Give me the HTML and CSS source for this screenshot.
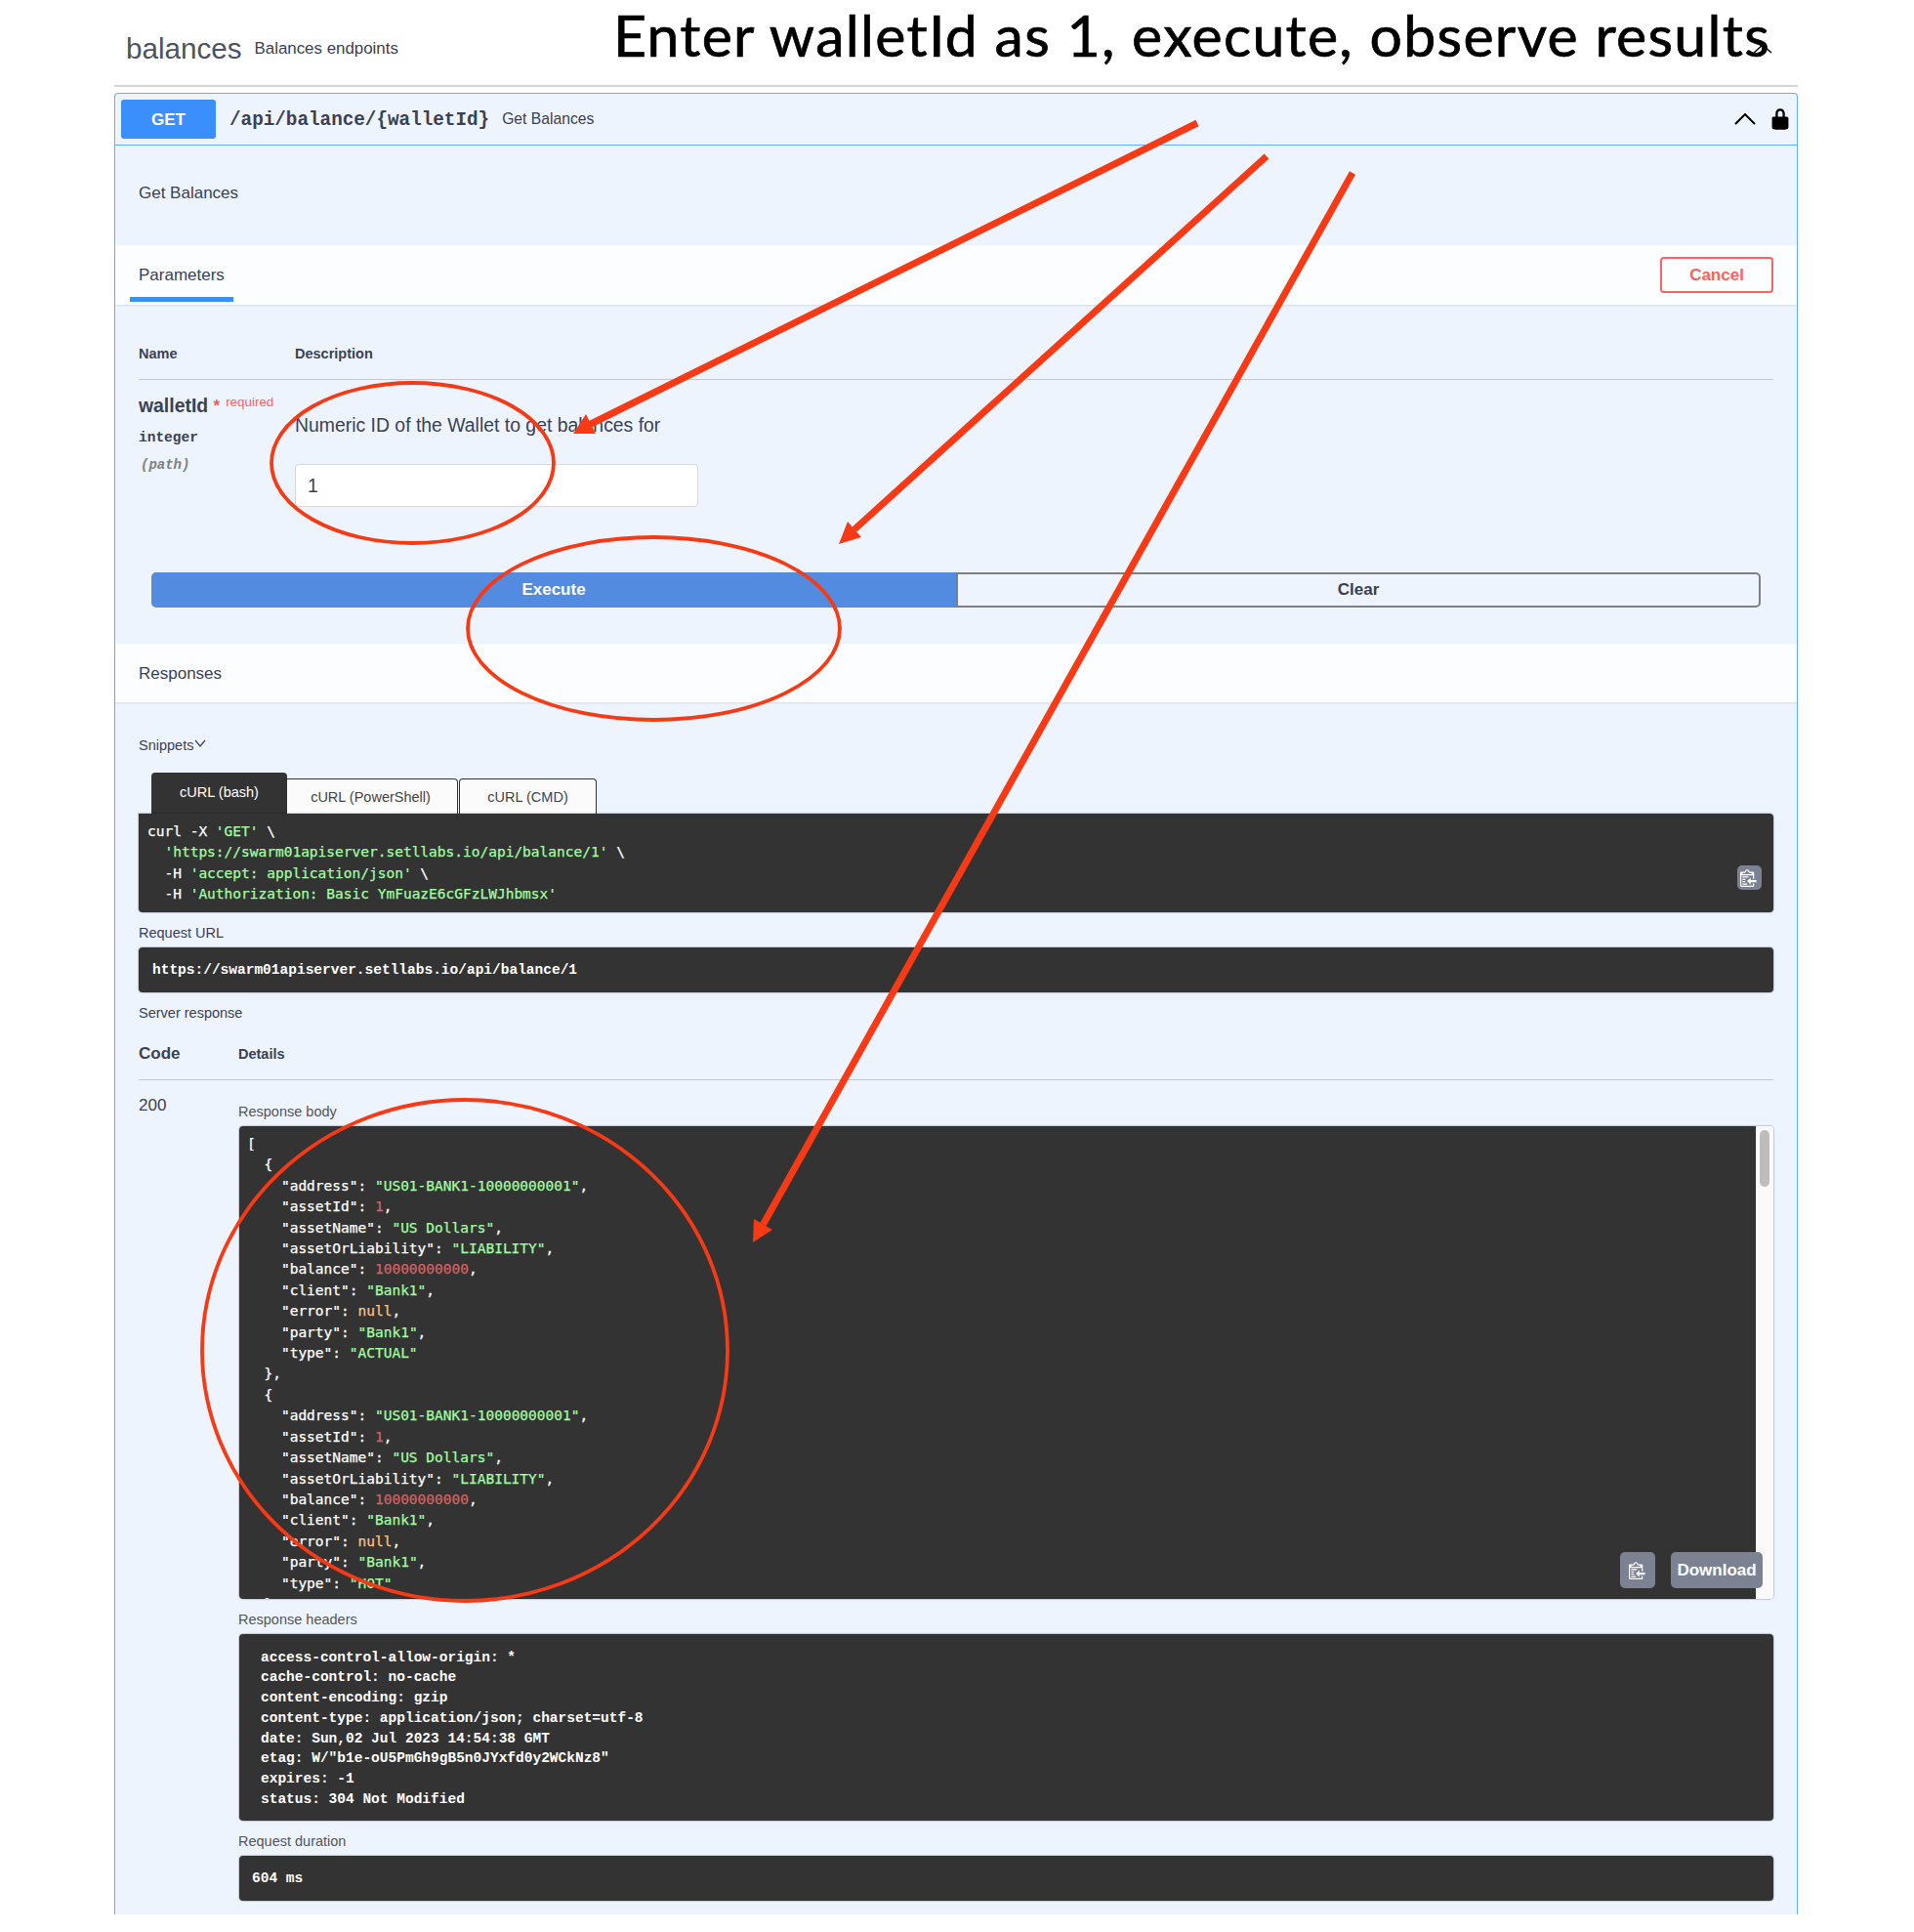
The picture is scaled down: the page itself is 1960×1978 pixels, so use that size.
FILE: index.html
```html
<!DOCTYPE html>
<html lang="en">
<head>
<meta charset="utf-8">
<title>balances</title>
<link rel="stylesheet" href="styles.css">
</head>
<body>
<svg class="sprite" aria-hidden="true"><symbol id="clip" viewBox="0 0 16 16"><path fill="#fff" fill-rule="evenodd" d="M2 13h4v1H2v-1zm5-6H2v1h5V7zm2 3V8l-3 3 3 3v-2h5v-2H9zM4.5 9H2v1h2.5V9zM2 12h2.5v-1H2v1zm9 1h1v2c-.02.28-.11.52-.3.7-.19.18-.42.28-.7.3H1c-.55 0-1-.45-1-1V4c0-.55.45-1 1-1h3c0-1.11.89-2 2-2 1.11 0 2 .89 2 2h3c.55 0 1 .45 1 1v5h-1V6H1v9h10v-2zM2 5h8c0-.55-.45-1-1-1H8c-.55 0-1-.45-1-1s-.45-1-1-1-1 .45-1 1-.45 1-1 1H3c-.55 0-1 .45-1 1z"/></symbol></svg>
<div class="page">
  <header class="tag">
    <h3 class="tag-name">balances</h3>
    <small class="tag-desc">Balances endpoints</small>
    <svg class="tag-arrow" viewBox="0 0 20 10"><polyline points="1,9 10,1 19,9"/></svg>
  </header>

  <section class="opblock">
    <div class="summary">
      <span class="method">GET</span>
      <span class="path">/api/balance/{walletId}</span>
      <span class="summary-desc">Get Balances</span>
      <svg class="chev-up" viewBox="0 0 22 12"><polyline points="1,11 11,1 21,11"/></svg>
      <svg class="lock" viewBox="0 0 20 20"><path d="M15.8 8H14V5.6C14 2.703 12.665 1 10 1 7.334 1 6 2.703 6 5.6V8H4c-.553 0-1 .646-1 1.199V17c0 .549.428 1.139.951 1.307l1.197.387C5.672 18.861 6.55 19 7.1 19h5.8c.549 0 1.428-.139 1.951-.307l1.196-.387c.524-.167.953-.757.953-1.306V9.199C17 8.646 16.352 8 15.8 8zM12 8H8V5.199C8 3.754 8.797 3 10 3c1.203 0 2 .754 2 2.199V8z"/></svg>
    </div>

    <div class="op-desc">Get Balances</div>

    <div class="bar bar-tabs">
      <span class="bar-tab">Parameters</span>
      <button class="cancel">Cancel</button>
    </div>

    <div class="params">
      <div class="params-head"><span>Name</span><span>Description</span></div>
      <div class="param-row">
        <div class="param-name">
          <div class="pname">walletId <span class="star">*</span><span class="req">required</span></div>
          <div class="ptype">integer</div>
          <div class="pin">(path)</div>
        </div>
        <div class="param-value">
          <p class="pdesc">Numeric ID of the Wallet to get balances for</p>
          <input class="pinput" type="text" value="1">
        </div>
      </div>
    </div>

    <div class="exec">
      <button class="btn-exec">Execute</button>
      <button class="btn-clear">Clear</button>
    </div>

    <div class="bar bar-resp">Responses</div>

    <div class="resp">
      <div class="snip">Snippets<svg class="chev-down" viewBox="0 0 12 8"><polyline points="1,1 6,7 11,1"/></svg></div>
      <div class="tabs">
        <span class="tab tab-on">cURL (bash)</span>
        <span class="tab tab-ps">cURL (PowerShell)</span>
        <span class="tab tab-cmd">cURL (CMD)</span>
      </div>
<div class="dark curl"><pre class="code">curl -X <span class="s">'GET'</span> \
  <span class="s">'https://swarm01apiserver.setllabs.io/api/balance/1'</span> \
  -H <span class="s">'accept: application/json'</span> \
  -H <span class="s">'Authorization: Basic YmFuazE6cGFzLWJhbmsx'</span></pre><span class="copy copy-sm"><svg class="clip"><use href="#clip"/></svg></span></div>

      <div class="label">Request URL</div>
      <div class="dark single url">https://swarm01apiserver.setllabs.io/api/balance/1</div>
      <div class="label">Server response</div>

      <div class="code-head"><span class="ch-code">Code</span><span class="ch-details">Details</span></div>

      <div class="resp-row">
        <div class="status">200</div>
        <div class="resp-col">
          <div class="label label-first">Response body</div>
          <div class="body-box">
<pre class="code json">[
  {
    "address": <span class="s">"US01-BANK1-10000000001"</span>,
    "assetId": <span class="n">1</span>,
    "assetName": <span class="s">"US Dollars"</span>,
    "assetOrLiability": <span class="s">"LIABILITY"</span>,
    "balance": <span class="n">10000000000</span>,
    "client": <span class="s">"Bank1"</span>,
    "error": <span class="l">null</span>,
    "party": <span class="s">"Bank1"</span>,
    "type": <span class="s">"ACTUAL"</span>
  },
  {
    "address": <span class="s">"US01-BANK1-10000000001"</span>,
    "assetId": <span class="n">1</span>,
    "assetName": <span class="s">"US Dollars"</span>,
    "assetOrLiability": <span class="s">"LIABILITY"</span>,
    "balance": <span class="n">10000000000</span>,
    "client": <span class="s">"Bank1"</span>,
    "error": <span class="l">null</span>,
    "party": <span class="s">"Bank1"</span>,
    "type": <span class="s">"HOT"</span>
  }
]</pre>
            <div class="scroll"><span class="thumb"></span></div>
            <div class="body-actions">
              <span class="copy copy-lg"><svg class="clip"><use href="#clip"/></svg></span>
              <span class="download">Download</span>
            </div>
          </div>

          <div class="label">Response headers</div>
<pre class="dark headers">access-control-allow-origin: *
cache-control: no-cache
content-encoding: gzip
content-type: application/json; charset=utf-8
date: Sun,02 Jul 2023 14:54:38 GMT
etag: W/"b1e-oU5PmGh9gB5n0JYxfd0y2WCkNz8"
expires: -1
status: 304 Not Modified</pre>

          <div class="label">Request duration</div>
          <div class="dark single dur">604 ms</div>
        </div>
      </div>
    </div>
  </section>
</div>

<div class="note-title">Enter walletId as 1, execute, observe results</div>
<svg class="marks" viewBox="0 0 1960 1978">
  <g class="rings">
    <ellipse cx="422.5" cy="474" rx="144.5" ry="82"/>
    <ellipse cx="669.5" cy="643.5" rx="190.5" ry="93.5"/>
    <ellipse cx="476" cy="1382.5" rx="269" ry="256.5"/>
  </g>
  <g class="shafts">
    <line x1="1226" y1="126" x2="605" y2="434"/>
    <line x1="1297" y1="160" x2="875" y2="542"/>
    <line x1="1385" y1="177" x2="781.5" y2="1253.5"/>
  </g>
  <g class="heads">
    <polygon points="587,444 600,424 610,444"/>
    <polygon points="859,557 868,534 882,550"/>
    <polygon points="771,1272 772,1248 791,1259"/>
  </g>
</svg>
</body>
</html>
```
FILE: styles.css
```css
* { box-sizing: border-box; }
html, body { margin: 0; padding: 0; background: #fff; }
body {
  position: relative;
  width: 1960px;
  height: 1978px;
  overflow: hidden;
  font-family: "Liberation Sans", Arial, sans-serif;
  color: #3b4151;
}
.sprite { display: none; }
.page { width: 1960px; padding: 0 119px 0 117px; }

.tag {
  display: flex;
  align-items: center;
  height: 89px;
  padding: 13px 26px 0 12px;
  border-bottom: 2px solid #d3d5d8;
  margin-bottom: 6px;
}
.tag-name { margin: 0; font-size: 29.6px; font-weight: 400; color: #4d5360; }
.tag-desc { margin-left: 13px; font-size: 16.9px; }
.tag-arrow { margin-left: auto; width: 20px; height: 10px; fill: none; stroke: #111; stroke-width: 1.6; }

.opblock {
  background: #edf4fe;
  border: 1px solid #61affe;
  border-bottom: 0;
  border-radius: 4px 4px 0 0;
  padding-bottom: 14px;
}
.summary {
  display: flex;
  align-items: center;
  height: 53px;
  padding: 0 6px;
  border-bottom: 1px solid #61affe;
}
.method {
  width: 97px;
  height: 40px;
  display: flex;
  align-items: center;
  justify-content: center;
  padding-top: 1px;
  background: #3a8ffc;
  color: #fff;
  font-size: 17px;
  font-weight: 700;
  border-radius: 3px;
}
.path {
  margin-left: 14px;
  padding-top: 1px;
  font: 700 19.3px "Liberation Mono", monospace;
}
.summary-desc { margin-left: 13px; font-size: 15.7px; }
.chev-up { margin-left: auto; width: 22px; height: 12px; fill: none; stroke: #000; stroke-width: 2; }
.lock { margin: 0 -1px 0 13px; width: 24px; height: 24px; fill: #000; }

.op-desc { height: 102px; padding: 39px 24px 0; font-size: 17px; line-height: 20px; }

.bar {
  background: rgba(255, 255, 255, .8);
  box-shadow: 0 1px 2px rgba(0, 0, 0, .1);
  padding: 0 24px;
}
.bar-tabs {
  height: 61px;
  display: flex;
  justify-content: space-between;
  align-items: flex-start;
}
.bar-tab {
  height: 58px;
  margin-left: -9px;
  padding: 9px 9px 0;
  display: flex;
  align-items: center;
  font-size: 17px;
  border-bottom: 5px solid #3a8ffc;
}
.cancel {
  margin-top: 12px;
  width: 116px;
  height: 37px;
  background: transparent;
  border: 2.4px solid #ff6060;
  border-radius: 4px;
  color: #ff6060;
  font: 700 17px "Liberation Sans", sans-serif;
}

.params { padding: 24px 24px 0; }
.params-head {
  display: grid;
  grid-template-columns: 160px 1fr;
  align-items: center;
  height: 53px;
  border-bottom: 1px solid #c4c9d0;
  font-size: 14.5px;
  font-weight: 700;
}
.param-row { display: grid; grid-template-columns: 160px 1fr; }
.param-name { padding-top: 9px; }
.pname { font-size: 19.4px; font-weight: 700; height: 27px; line-height: 27px; white-space: nowrap; }
.star { color: #f55; font-size: 17px; vertical-align: 1px; }
.req { color: #ff6060; font-size: 13.4px; margin-left: 6px; vertical-align: 6px; font-weight: 400; }
.ptype { margin-top: 12px; height: 22px; font: 700 14.5px/22px "Liberation Mono", monospace; }
.pin { margin: 6px 0 0 2px; height: 22px; font: italic 700 14px/22px "Liberation Mono", monospace; color: #808080; }
.pdesc { margin: 33px 0 0; font-size: 19.4px; line-height: 26px; }
.pinput {
  display: block;
  margin-top: 27px;
  width: 413px;
  height: 44px;
  padding: 0 12px;
  background: #fff;
  border: 1px solid #d9d9d9;
  border-radius: 4px;
  font: 19.4px "Liberation Sans", sans-serif;
  color: #3b4151;
}

.exec { display: flex; margin-top: 67px; padding: 0 37px; }
.btn-exec, .btn-clear {
  flex: 0 0 50%;
  height: 36px;
  font: 700 17px "Liberation Sans", sans-serif;
}
.btn-exec { background: #528bdf; color: #fff; border: 0; border-radius: 5px 0 0 5px; }
.btn-clear { background: transparent; color: #3b4151; border: 2px solid #7f7f7f; border-radius: 0 5px 5px 0; }

.bar-resp { margin-top: 37px; height: 60px; line-height: 62px; font-size: 17px; }

.resp { padding: 34px 24px 0; }
.snip { display: flex; align-items: flex-start; height: 20px; line-height: 20px; font-size: 14.5px; }
.chev-down { margin: 4px 0 0 1px; width: 12px; height: 8px; fill: none; stroke: #3b4151; stroke-width: 1.2; }
.tabs { display: flex; align-items: flex-end; height: 42px; margin-top: 18px; padding-left: 13px; }
.tab {
  display: flex;
  align-items: center;
  justify-content: center;
  font-size: 14.5px;
  border-radius: 4px 4px 0 0;
}
.tab-on { width: 139px; height: 42px; padding-bottom: 2px; background: #333; color: #fff; }
.tab-ps, .tab-cmd {
  height: 36px;
  background: #fbfbfb;
  border: 1px solid #333;
  border-bottom: 0;
  color: #444;
}
.tab-ps { width: 175px; padding-right: 3px; border-left: 0; border-top-left-radius: 0; }
.tab-cmd { width: 141px; margin-left: 1px; }

.dark {
  background: #333;
  color: #fff;
  border-radius: 4px;
  box-shadow: 0 0 1px 1px rgba(0, 0, 0, .18);
}
.code {
  margin: 0;
  font: 14.5px/21.4px "DejaVu Sans Mono", monospace;
  -webkit-text-stroke: .25px currentColor;
  color: #fff;
}
.s { color: #a2fca2; }
.n { color: #d36363; }
.l { color: #fcc28c; }
.curl { position: relative; height: 101px; padding: 8px 9px; border-radius: 0 4px 4px 4px; }
.copy {
  display: flex;
  align-items: center;
  justify-content: center;
  background: #7d8293;
  border-radius: 5px;
}
.clip { width: 19px; height: 19px; }
.copy-sm { position: absolute; right: 12px; bottom: 23px; width: 25px; height: 25px; }
.copy-lg { width: 36px; height: 37px; }

.label { margin-top: 11px; height: 20px; line-height: 20px; font-size: 14.5px; color: #3b4151; }
.single {
  margin-top: 5px;
  height: 46px;
  display: flex;
  align-items: center;
  font: 700 14.5px "Liberation Mono", monospace;
}
.url { padding-left: 14px; }
.dur { padding-left: 13px; }

.code-head {
  display: flex;
  align-items: center;
  height: 54px;
  margin-top: 5px;
  border-bottom: 1px solid #c4c9d0;
  font-weight: 700;
}
.ch-code { width: 102px; font-size: 17px; }
.ch-details { font-size: 14.5px; }

.resp-row { display: grid; grid-template-columns: 102px 1fr; }
.status { padding-top: 15px; font-size: 17px; line-height: 22px; }
.resp-col { min-width: 0; }
.resp-col .label { color: #555; }
.resp-col .label-first { margin-top: 22px; }
.body-box {
  position: relative;
  display: flex;
  margin: 5px 0 0 1px;
  height: 484px;
  border-radius: 4px;
  overflow: hidden;
  box-shadow: 0 0 1px 1px rgba(0, 0, 0, .18);
}
.json { flex: 1; padding: 8px 8px; background: #333; overflow: hidden; }
.scroll { width: 18px; padding: 4px; background: #fafafa; }
.thumb { display: block; width: 10px; height: 58px; border-radius: 5px; background: #bdbdbd; }
.body-actions { position: absolute; right: 11px; bottom: 11px; display: flex; gap: 16px; }
.download {
  display: flex;
  align-items: center;
  justify-content: center;
  width: 94px;
  height: 37px;
  background: #7d8293;
  border-radius: 5px;
  color: #fff;
  font-size: 17px;
  font-weight: 700;
}
.headers {
  margin: 5px 0 0 1px;
  height: 191px;
  padding: 13.5px 22px;
  font: 700 14.5px/20.8px "Liberation Mono", monospace;
}
.dur { margin-left: 1px; }

.note-title {
  position: absolute;
  left: 628px;
  top: -2px;
  font: 400 59px/76px Lato, sans-serif;
  letter-spacing: 1.3px;
  -webkit-text-stroke: .7px #000;
  color: #000;
  white-space: nowrap;
}
.marks { position: absolute; left: 0; top: 0; width: 1960px; height: 1978px; pointer-events: none; }
.rings { fill: none; stroke: #f63a16; stroke-width: 3.8; }
.shafts { stroke: #f63a16; stroke-width: 7; }
.heads { fill: #f63a16; }
```
